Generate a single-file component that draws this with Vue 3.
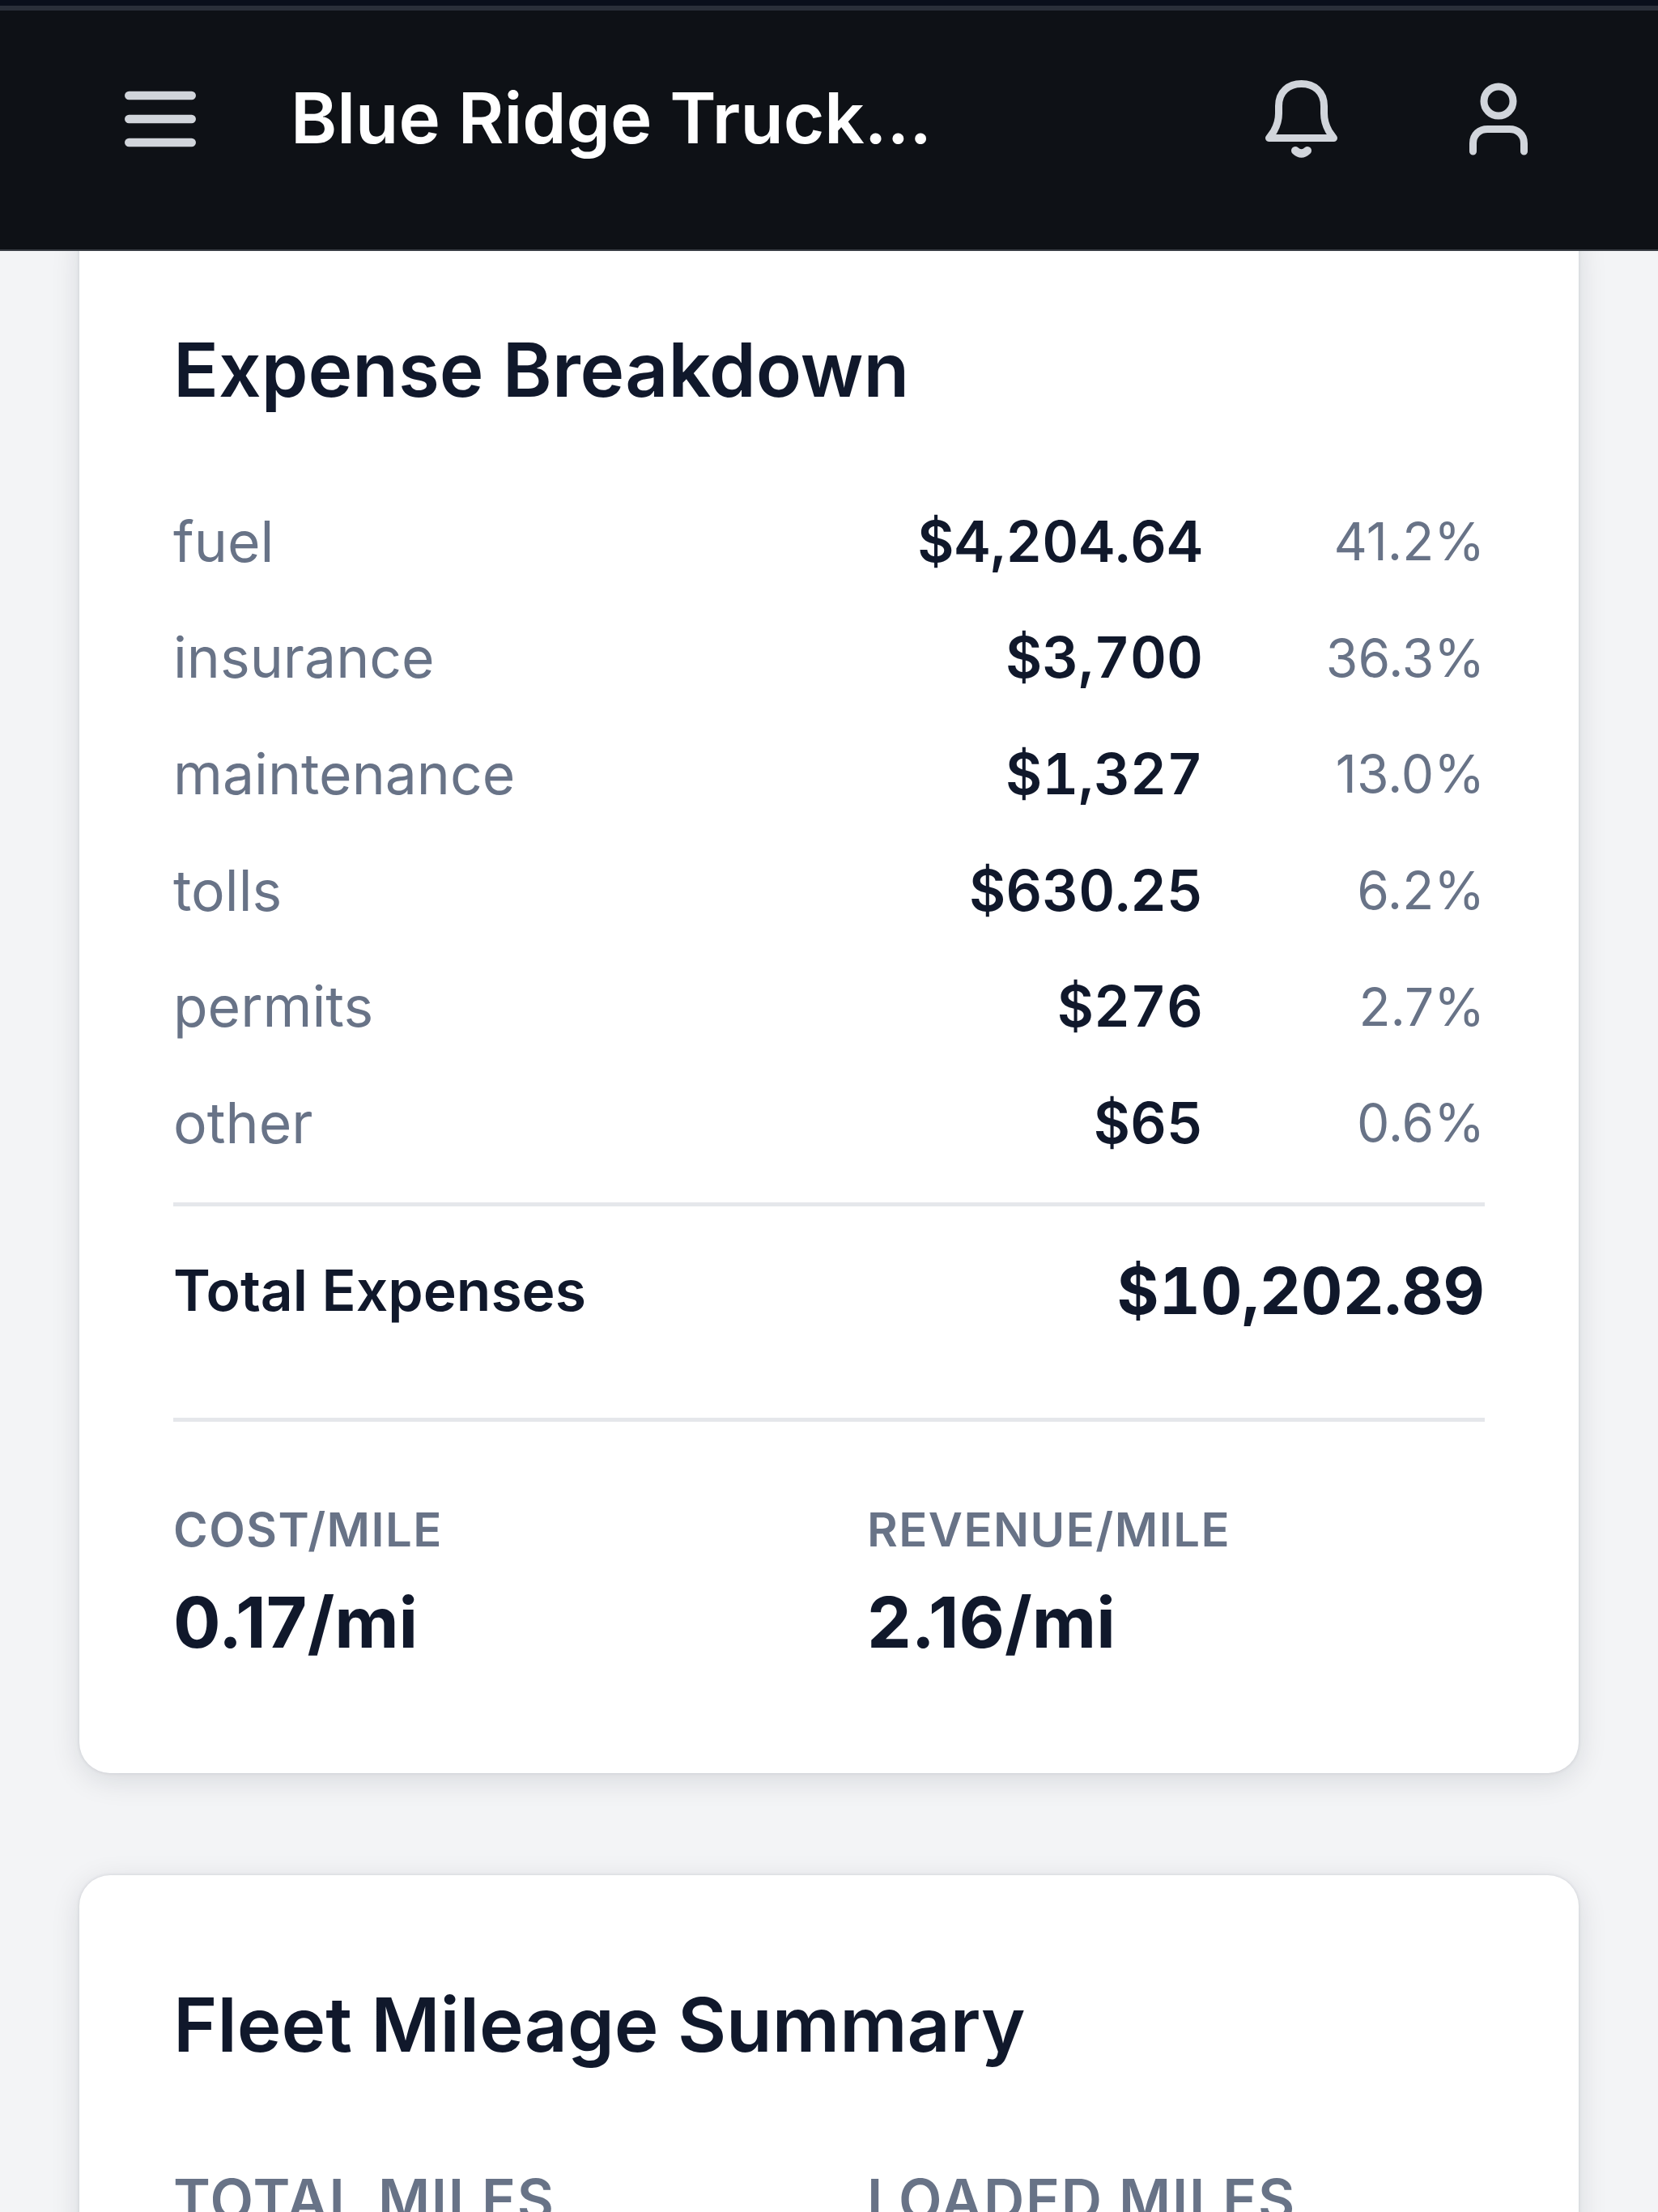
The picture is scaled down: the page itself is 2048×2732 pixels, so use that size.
<template>
  <div class="page">
    <div class="status-strip"></div>
    <header class="topbar">
      <svg class="menu-icon" viewBox="0 0 24 24" fill="none" stroke="currentColor" stroke-width="2.2" stroke-linecap="round">
        <path d="M4 6h16M4 12h16M4 18h16" />
      </svg>
      <h1 class="brand">Blue Ridge Truck...</h1>
      <svg class="bell" viewBox="0 0 89 97" fill="none" stroke="currentColor" stroke-width="9" stroke-linecap="round" stroke-linejoin="round">
        <path d="M4.500 71.500h80l-6-8.500c-4-7-6-14-6-22V32C72.500 14 60 4.500 44.500 4.500S16.500 14 16.500 32v9c0 8-2 15-6 22Z" />
        <path d="M37 87q7.500 7 15 0" stroke-width="10" />
      </svg>
      <svg class="user" viewBox="0 0 72 92" fill="none" stroke="currentColor" stroke-width="9" stroke-linecap="round" stroke-linejoin="round">
        <circle cx="36" cy="24" r="18" />
        <path d="M4.500 86V76c0-11 8-17.500 18-17.500h27c10 0 18 6.500 18 17.500v10" />
      </svg>
    </header>

    <main class="content">
      <section class="card first">
        <h2>Expense Breakdown</h2>
        <div class="rows">
          <div v-for="row in expenses" :key="row.name" class="row">
            <span class="name">{{ row.name }}</span>
            <span class="amount">{{ row.amount }}</span>
            <span class="pct">{{ row.pct }}</span>
          </div>
        </div>
        <div class="total">
          <span>Total Expenses</span>
          <strong>$10,202.89</strong>
        </div>
        <div class="metrics">
          <div>
            <div class="label">COST/MILE</div>
            <div class="value">0.17/mi</div>
          </div>
          <div>
            <div class="label">REVENUE/MILE</div>
            <div class="value">2.16/mi</div>
          </div>
        </div>
      </section>

      <section class="card second">
        <h2>Fleet Mileage Summary</h2>
        <div class="metrics large">
          <div>
            <div class="label">TOTAL MILES</div>
          </div>
          <div>
            <div class="label">LOADED MILES</div>
          </div>
        </div>
      </section>
    </main>
  </div>
</template>

<script setup>
const expenses = [
  { name: 'fuel', amount: '$4,204.64', pct: '41.2%' },
  { name: 'insurance', amount: '$3,700', pct: '36.3%' },
  { name: 'maintenance', amount: '$1,327', pct: '13.0%' },
  { name: 'tolls', amount: '$630.25', pct: '6.2%' },
  { name: 'permits', amount: '$276', pct: '2.7%' },
  { name: 'other', amount: '$65', pct: '0.6%' }
]
</script>

<style>
html,
body {
  margin: 0;
  background: #f3f4f6;
}
</style>

<style scoped>
.page {
  height: 2732px;
  overflow: hidden;
  background: #f3f4f6;
  font-family: Inter, "Liberation Sans", sans-serif;
  color: #10182b;
}

.status-strip {
  height: 7px;
  background: #0a0f1c;
  border-bottom: 6px solid #2a2f3a;
}

.topbar {
  height: 297px;
  box-sizing: border-box;
  background: #0e1116;
  border-bottom: 2px solid #3a3e45;
  display: flex;
  align-items: center;
  padding: 0 0 27px 140px;
  color: #d1d5db;
  position: relative;
  z-index: 1;
}

.menu-icon {
  width: 116px;
  height: 116px;
  flex: none;
  margin-right: 103px;
}

.brand {
  margin: 0 0 3px;
  font-size: 87px;
  font-weight: 600;
  color: #fff;
  line-height: 1;
  flex: 1;
}

.bell {
  width: 89px;
  height: 97px;
  margin-right: 163px;
}

.user {
  width: 72px;
  height: 92px;
  margin-right: 161px;
}

.content {
  padding: 0 98px;
}

.card {
  background: #fff;
  border-radius: 38px;
  padding: 0 116px;
  box-shadow: 0 8px 36px rgba(15, 23, 42, 0.12), 0 0 4px rgba(15, 23, 42, 0.12);
}

.first {
  margin-top: -40px;
  padding-top: 118px;
  padding-bottom: 128px;
}

.second {
  margin-top: 126px;
  padding-top: 116px;
  height: 800px;
}

h2 {
  margin: 0;
  font-size: 92.600px;
  font-weight: 600;
  line-height: 136px;
  color: #10182b;
}

.rows {
  margin-top: 73px;
}

.row {
  display: grid;
  grid-template-columns: 1fr auto 348px;
  height: 143.600px;
  align-items: center;
  font-size: 69.600px;
}

.name {
  color: #687387;
}

.amount {
  font-weight: 600;
  font-variant-numeric: tabular-nums;
  color: #10182b;
}

.pct {
  font-size: 64px;
  color: #687387;
  text-align: right;
}

.total {
  display: flex;
  justify-content: space-between;
  align-items: center;
  border-top: 5px solid #e5e7eb;
  border-bottom: 5px solid #e5e7eb;
  margin-top: 26px;
  height: 271px;
  padding-bottom: 53px;
  box-sizing: border-box;
  font-size: 69.600px;
  font-weight: 600;
}

.total strong {
  font-size: 79.500px;
  font-weight: 700;
  font-variant-numeric: tabular-nums;
}

.metrics {
  display: grid;
  grid-template-columns: 1fr 1fr;
  column-gap: 94px;
  margin-top: 99px;
}

.label {
  font-size: 58px;
  font-weight: 600;
  letter-spacing: 0.025em;
  color: #687387;
  line-height: 68px;
}

.value {
  font-size: 87px;
  font-weight: 700;
  color: #10182b;
  line-height: 116px;
  margin-top: 23px;
}

.large {
  margin-top: 109px;
}

.large .label {
  font-size: 69.600px;
  line-height: 80px;
}
</style>
